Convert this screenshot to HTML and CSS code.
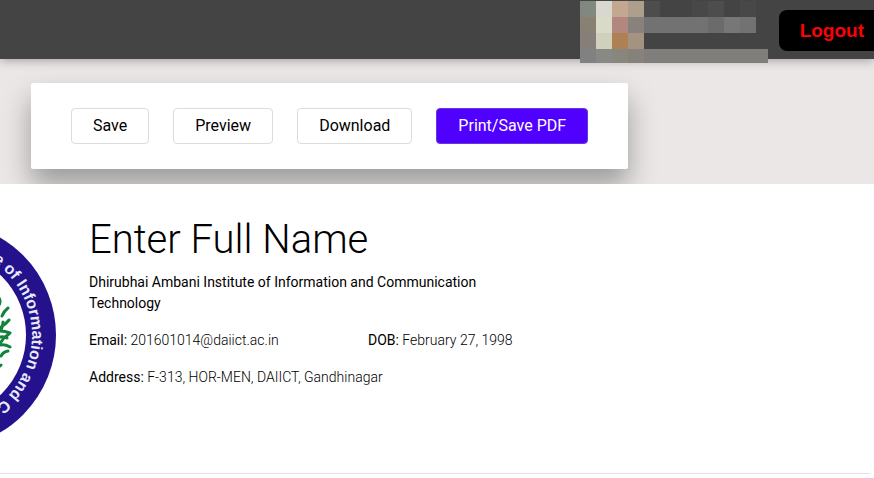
FILE: index.html
```html
<!DOCTYPE html>
<html lang="en">
<head>
<meta charset="utf-8">
<title>Resume builder</title>
<link rel="stylesheet" href="styles.css">
</head>
<body>
<header class="topbar">
  <svg class="account" width="188" height="63" viewBox="0 0 188 63" shape-rendering="crispEdges" aria-hidden="true">
    <path fill="#808880" d="M0 1h16v16H0z"/><path fill="#d8d8d0" d="M16 1h16v16H16z"/><path fill="#c3a78f" d="M32 1h16v16H32z"/><path fill="#ae9f8c" d="M48 1h16v16H48z"/>
    <path fill="#4d4d4d" d="M64 1h16v16H64zM128 1h16v16h-16z"/><path fill="#484848" d="M112 1h16v16h-16zM160 1h16v16h-16z"/>
    <path fill="#888171" d="M0 17h16v16H0z"/><path fill="#dadac8" d="M16 17h16v16H16z"/><path fill="#b48680" d="M32 17h16v16H32z"/><path fill="#87827e" d="M48 17h16v16H48z"/>
    <path fill="#727272" d="M64 17h112v16H64z"/><path fill="#6b6b6b" d="M128 17h16v16h-16z"/><path fill="#777" d="M144 17h16v16h-16z"/>
    <path fill="#857e7b" d="M0 33h16v16H0z"/><path fill="#d0d0bd" d="M16 33h16v16H16z"/><path fill="#ae8154" d="M32 33h16v16H32z"/><path fill="#a59382" d="M48 33h16v16H48z"/>
    <path fill="#807e7b" d="M0 49h188v14H0z"/><path fill="#828181" d="M0 49h16v14H0z"/><path fill="#888885" d="M16 49h16v14H16z"/><path fill="#88877e" d="M32 49h16v14H32z"/><path fill="#86817b" d="M48 49h16v14H48z"/>
  </svg>
  <button class="logout" type="button">Logout</button>
</header>
<main>
  <section class="tools">
    <div class="card">
      <button class="btn" type="button">Save</button>
      <button class="btn" type="button">Preview</button>
      <button class="btn" type="button">Download</button>
      <button class="btn primary" type="button">Print/Save PDF</button>
    </div>
  </section>
  <article class="resume">
    <div class="profile">
      <svg class="seal" width="57" height="230" viewBox="0 220 57 230" aria-hidden="true">
        <circle cx="-57" cy="335" r="98" fill="none" stroke="#24118c" stroke-width="30"/>
        <path id="ring" d="M-57 246A89 89 0 0 1 -57 424" fill="none"/>
        <text class="ring-text"><textPath href="#ring" startOffset="47">te of Information and C</textPath></text>
        <g fill="none" stroke="#12833c" stroke-width="3" stroke-linecap="round">
          <path d="M-1 298q2 4 0 7M2 316q2-5 6-8M1 327q4-2 8-7M3 322q0 5-3 9M0 331q5 0 10 2M1 342q3-5 8-8M0 345q5-1 10 2M1 356q2-4 7-5M0 366l1-1M0 337q4-1 7 1"/>
        </g>
      </svg>
      <div class="details">
        <h1>Enter Full Name</h1>
        <p class="school">Dhirubhai Ambani Institute of Information and Communication Technology</p>
        <div class="facts">
          <p><b>Email:</b> 201601014@daiict.ac.in</p>
          <p><b>DOB:</b> February 27, 1998</p>
        </div>
        <p><b>Address:</b> F-313, HOR-MEN, DAIICT, Gandhinagar</p>
      </div>
    </div>
  </article>
</main>
</body>
</html>
```
FILE: styles.css
```css
* {
  box-sizing: border-box;
}

body {
  margin: 0;
  background: #fff;
  color: #000;
  font-family: Roboto, sans-serif;
}

h1,
p {
  margin: 0;
}

.topbar {
  position: relative;
  z-index: 1;
  display: flex;
  justify-content: flex-end;
  align-items: flex-start;
  gap: 11px;
  height: 59px;
  background: #444;
  box-shadow: 0 1px 10px rgba(0, 0, 0, 0.35);
}

.account {
  flex: none;
}

.logout {
  height: 41px;
  margin-top: 10px;
  padding: 0 10px 0 21px;
  border: 0;
  border-radius: 8px 0 0 8px;
  background: #000;
  color: #f00;
  font: bold 19px "Liberation Sans", sans-serif;
}

.tools {
  padding: 24px 31px 15px;
  overflow: hidden;
  background: #ebe7e6;
}

.card {
  display: flex;
  gap: 24px;
  width: fit-content;
  padding: 25px 40px;
  border-radius: 2px;
  background: #fff;
  box-shadow: 0 16px 28px rgba(0, 10, 5, 0.34);
}

.btn {
  height: 36px;
  padding: 0 21px 2px;
  border: 1px solid #dcdcdc;
  border-radius: 4px;
  background: #fff;
  color: #000;
  font: 400 16px Roboto, sans-serif;
}

.primary {
  border-color: #6b38d8;
  background: #5000ff;
  color: #fff;
}

.resume {
  margin-right: 4px;
  border-bottom: 1px solid #e1e1e1;
}

.profile {
  display: flex;
  gap: 32px;
  padding: 36px 0 23px;
}

.seal {
  flex: none;
}

.ring-text {
  fill: #e6eaff;
  font: bold 16px "Liberation Sans", sans-serif;
}

.details {
  width: 460px;
  font-size: 14px;
  font-weight: 300;
  line-height: 21px;
}

h1 {
  margin-bottom: 12px;
  font-size: 40px;
  font-weight: 300;
  line-height: 40px;
}

.school {
  max-width: 420px;
  font-weight: 400;
}

.facts {
  display: grid;
  grid-template-columns: 279px 1fr;
  margin: 16px 0;
}

b {
  font-weight: 400;
}
```
